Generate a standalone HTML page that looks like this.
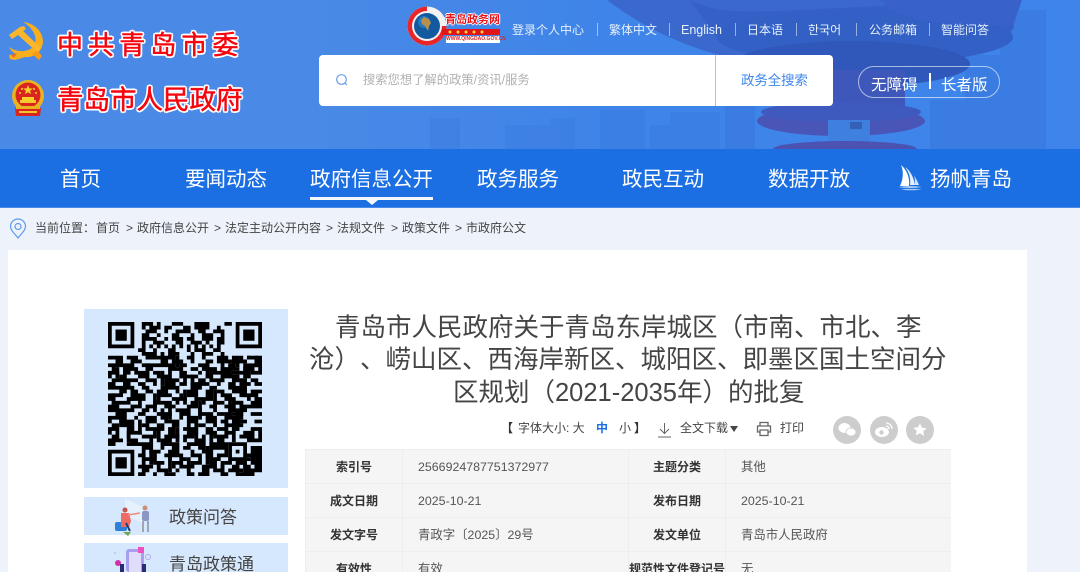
<!DOCTYPE html>
<html lang="zh-CN">
<head>
<meta charset="utf-8">
<title>青岛市人民政府</title>
<style>
*{margin:0;padding:0;box-sizing:border-box}
html,body{width:1080px;height:572px;overflow:hidden;background:#eef3fb}
body{position:relative;font-family:"Liberation Sans","Noto Sans CJK SC",sans-serif;color:#444;text-spacing-trim:space-all;font-feature-settings:"palt" 0}
.a{position:absolute;white-space:nowrap}
#hd{position:absolute;left:0;top:0;width:1080px;height:149px;background:linear-gradient(90deg,#4a8ae6 0,#4a8ae6 300px,#3f84e8 600px,#3e84ea 1080px);overflow:hidden}
.red{color:#f5060f;font-weight:400;-webkit-text-stroke:.5px #f5060f;text-shadow:2px 0 0 #fff,-2px 0 0 #fff,0 2px 0 #fff,0 -2px 0 #fff,1.500px 1.500px 0 #fff,-1.500px -1.500px 0 #fff,1.500px -1.500px 0 #fff,-1.500px 1.500px 0 #fff}
.tl{font-size:12px;color:#e6f0fd;top:22px;line-height:16px}
.sp{width:1px;height:13px;top:23px;background:rgba(255,255,255,.5)}
.nav{font-size:20.500px;color:#fff;top:166px;line-height:27px}
.bc{font-size:12px;color:#444;top:220px;line-height:16px}
.tb{font-size:12px;color:#444;top:420px;line-height:16px}
.cell{position:absolute;background:#f5f5f5;font-size:12px;line-height:35px;color:#555;overflow:hidden;white-space:nowrap}
.lb{font-weight:700;color:#333;text-align:center}
.vl{padding-left:15px;font-size:12.400px}
</style>
</head>
<body>
<div id="hd">
<svg width="1080" height="149" style="position:absolute;left:0;top:0">
<g fill="#3a7adf" opacity=".4">
<rect x="430" y="118" width="30" height="31"/><rect x="505" y="125" width="50" height="24"/><rect x="550" y="118" width="25" height="31"/><rect x="600" y="110" width="45" height="39"/><rect x="650" y="125" width="40" height="24"/><rect x="670" y="112" width="50" height="37"/>
</g>
<g fill="#3a7ce2">
<rect x="725" y="106" width="30" height="43"/>
<rect x="930" y="100" width="70" height="49"/>
<rect x="1000" y="10" width="46" height="139"/>
<rect x="965" y="55" width="40" height="94"/>
</g>
<path d="M607 0C640 25 680 45 720 55L860 72 1010 36 1022 0Z" fill="#3a68cc"/>
<path d="M690 0C730 20 760 10 1005 0L1014 28C990 50 900 60 860 62 780 60 735 45 720 42Z" fill="#3560c6"/>
<ellipse cx="865" cy="37" rx="148" ry="27" fill="#3360c4"/>
<path d="M880 0C900 20 930 25 1000 25L1012 25 1022 0Z" fill="#3862c9"/>
<ellipse cx="852" cy="64" rx="118" ry="23" fill="#2f58ba"/>
<rect x="785" y="70" width="120" height="45" fill="#3e57ba"/>
<ellipse cx="841" cy="121" rx="84" ry="15" fill="#4a55b8"/>
<ellipse cx="841" cy="112" rx="80" ry="10" fill="#3f5abf"/>
<rect x="828" y="120" width="42" height="22" fill="#3f80de"/>
<rect x="850" y="122" width="12" height="7" fill="#3560b8"/>
<ellipse cx="845" cy="149" rx="72" ry="8" fill="#4c52b2"/>
</svg>

<!-- party emblem -->
<svg class="a" style="left:8px;top:21px" width="36" height="40" viewBox="0 0 36 40">
<path d="M15 1C26 2 35 10 35 21 34 31 26 37 17 36L7 39 2 38 1 34 8 33C4 31 2 28 1 26 8 31 18 32 25 26 31 19 26 7 15 1Z" fill="#f9ae1c"/>
<path d="M34 35 29 29 24 33 31 39Z" fill="#f79a18"/>
<path d="M12 6 1 14 4 18 10 14 29 31 33 27 15 10 18 8 16 5Z" fill="#fbb62c"/>
<path d="M3 34 9 32 6 37Z" fill="#ef6b1e"/>
</svg>

<!-- national emblem -->
<svg class="a" style="left:10px;top:80px" width="36" height="38" viewBox="0 0 36 38">
<circle cx="18" cy="16" r="16" fill="#e9b321"/>
<circle cx="18" cy="15" r="12.500" fill="#d9251d"/>
<path d="M18 5l1.300 3.400 3.600.1-2.800 2.200 1 3.400L18 12.200l-3.100 1.900 1-3.400-2.800-2.200 3.600-.1Z" fill="#f7d02a"/>
<g fill="#f7d02a"><circle cx="10" cy="13" r="1"/><circle cx="26" cy="13" r="1"/><circle cx="12" cy="9" r="1"/><circle cx="24" cy="9" r="1"/></g>
<path d="M10 20H26V23H10Z" fill="#f3c62d"/>
<path d="M12 17H24V21H12Z" fill="#f7d02a"/>
<path d="M5 28H31L30 36H6Z" fill="#d9251d"/>
<path d="M6 26H30V29H6Z" fill="#e9b321"/>
<path d="M9 31H27V33H9Z" fill="#f3c62d"/>
</svg>

<div class="a red" style="left:57px;top:27px;font-size:26px;line-height:36px;letter-spacing:5.100px">中共青岛市委</div>
<div class="a red" style="left:57px;top:82px;font-size:26.500px;line-height:36px">青岛市人民政府</div>

<!-- portal logo -->
<svg class="a" style="left:406px;top:5px" width="96" height="42" viewBox="0 0 96 42">
<circle cx="21" cy="21" r="19.500" fill="#f2f2f2"/>
<path d="M21 1.500A19.500 19.500 0 1 0 40.500 21L36 21A15 15 0 1 1 21 6Z" fill="#e8262a"/>
<circle cx="21" cy="21" r="13" fill="#13599f"/>
<circle cx="18" cy="17" r="6" fill="#2f86c9" opacity=".7"/>
<path d="M18 12l5 2 2 4-2 3-1 5-3-5-3-2-1-4Z" fill="#b98f4c"/>
<path d="M36 24H94V30H36Z" fill="#e11419"/>
<path d="M40 31H94V38H40Z" fill="#fff"/>
<g fill="#ffd92b"><circle cx="44" cy="27" r="1.500"/><circle cx="52" cy="27" r="1.500"/><circle cx="60" cy="27" r="1.500"/><circle cx="68" cy="27" r="1.500"/><circle cx="76" cy="27" r="1.500"/></g>
</svg>
<div class="a" style="left:445px;top:13px;font-size:11px;line-height:15px;font-weight:700;color:#e8141a;text-shadow:1px 0 0 #fff,-1px 0 0 #fff,0 1px 0 #fff,0 -1px 0 #fff">青岛政务网</div>
<div class="a" style="left:446px;top:36px;font-size:5px;line-height:6px;color:#d8262a;font-weight:700">WWW.QINGDAO.GOV.CN</div>

<div class="a tl" style="left:512px">登录个人中心</div>
<div class="a sp" style="left:597px"></div>
<div class="a tl" style="left:609px">繁体中文</div>
<div class="a sp" style="left:669px"></div>
<div class="a tl" style="left:681px;font-size:12.500px">English</div>
<div class="a sp" style="left:735px"></div>
<div class="a tl" style="left:747px">日本语</div>
<div class="a sp" style="left:796px"></div>
<div class="a tl" style="left:808px;font-family:'Liberation Sans','Noto Sans CJK KR',sans-serif">한국어</div>
<div class="a sp" style="left:856px"></div>
<div class="a tl" style="left:869px">公务邮箱</div>
<div class="a sp" style="left:929px"></div>
<div class="a tl" style="left:941px">智能问答</div>

<div class="a" style="left:319px;top:55px;width:514px;height:51px;background:#fff;border-radius:4px"></div>
<div class="a" style="left:715px;top:55px;width:1px;height:51px;background:#a9c6f2"></div>
<svg class="a" style="left:335px;top:73px" width="14" height="14" viewBox="0 0 14 14" fill="none" stroke="#6f9ee6" stroke-width="1.200"><circle cx="6.500" cy="6.500" r="4.800"/><path d="M10 10l2 2"/></svg>
<div class="a" style="left:363px;top:72px;font-size:12.300px;line-height:17px;color:#b0b0b0">搜索您想了解的政策/资讯/服务</div>
<div class="a" style="left:741px;top:71px;font-size:13.400px;line-height:19px;color:#3f86e8">政务全搜索</div>

<div class="a" style="left:858px;top:66px;width:142px;height:32px;border:1px solid rgba(255,255,255,.6);border-radius:16px"></div>
<div class="a" style="left:871px;top:75px;font-size:15.500px;line-height:22px;color:#fff">无障碍</div>
<div class="a" style="left:929px;top:73px;width:1.500px;height:16px;background:#fff"></div>
<div class="a" style="left:941px;top:75px;font-size:15.500px;line-height:22px;color:#fff">长者版</div>
</div>

<!-- nav -->
<div class="a" style="left:0;top:149px;width:1080px;height:58px;background:#1b6fe3"></div>
<div class="a" style="left:0;top:207px;width:1080px;height:1px;background:#4a8ae8"></div>
<div class="a nav" style="left:60px">首页</div>
<div class="a nav" style="left:185px">要闻动态</div>
<div class="a nav" style="left:310px">政府信息公开</div>
<div class="a nav" style="left:477px">政务服务</div>
<div class="a nav" style="left:622px">政民互动</div>
<div class="a nav" style="left:768px">数据开放</div>
<div class="a nav" style="left:930px">扬帆青岛</div>
<div class="a" style="left:310px;top:197px;width:123px;height:3px;background:#f4f8fe"></div>
<div class="a" style="left:366px;top:200px;width:0;height:0;border-left:6px solid transparent;border-right:6px solid transparent;border-top:5px solid #f4f8fe"></div>
<svg class="a" style="left:898px;top:165px" width="25" height="26" viewBox="0 0 25 26">
<path d="M3 0C9 5 12 13 11 21H2C5 15 6 7 3 0Z" fill="#fff"/>
<path d="M7 2C13 6 16 14 17 20H12C13 13 11 7 7 2Z" fill="#e6f0fd"/>
<path d="M16 10C18 14 20 17 21 20H17C17 16 17 13 16 10Z" fill="#cfe2fb"/>
<path d="M0 22C8 21 16 21 24 22 16 23 8 23 0 22Z" fill="#dbe9fc"/>
<path d="M3 24.500C10 23.500 17 24 24 24.500 16 25.500 9 25.500 3 24.500Z" fill="#a9cbf7"/>
</svg>

<!-- breadcrumb -->
<svg class="a" style="left:9px;top:218px" width="18" height="21" viewBox="0 0 18 21" fill="none" stroke="#5b9aee" stroke-width="1.200"><path d="M9 20C5 15 1.500 12 1.500 8.500A7.500 7.500 0 0 1 16.500 8.500C16.500 12 13 15 9 20Z"/><circle cx="9" cy="8.500" r="3"/></svg>
<div class="a bc" style="left:35px">当前位置：</div>
<div class="a bc" style="left:96px">首页</div>
<div class="a bc" style="left:126px">&gt;</div><div class="a bc" style="left:137px">政府信息公开</div>
<div class="a bc" style="left:214px">&gt;</div><div class="a bc" style="left:225px">法定主动公开内容</div>
<div class="a bc" style="left:326px">&gt;</div><div class="a bc" style="left:337px">法规文件</div>
<div class="a bc" style="left:391px">&gt;</div><div class="a bc" style="left:402px">政策文件</div>
<div class="a bc" style="left:455px">&gt;</div><div class="a bc" style="left:466px">市政府公文</div>

<!-- card -->
<div class="a" style="left:8px;top:250px;width:1019px;height:322px;background:#fff"></div>

<div class="a" style="left:84px;top:309px;width:204px;height:179px;background:#d6e8fd"></div>
<svg class="a" style="left:108px;top:322px" width="154" height="154" viewBox="0 0 41 41">
<path stroke="#000" stroke-width="1" fill="none" d="
M9 .5h3m1 0h1m3 0h3m3 0h4m4 0h2
M9 1.500h1m1 0h3m1 0h2m3 0h2m1 0h4m2 0h1
M10 2.500h3m2 0h1m2 0h4m2 0h2m2 0h3
M9 3.500h2m2 0h1m3 0h2m3 0h1m2 0h3m2 0h1
M9 4.500h4m2 0h1m1 0h3m1 0h2m2 0h3m1 0h2
M9 5.500h1m2 0h3m3 0h2m2 0h3m1 0h1m2 0h2
M9 6.500h1m1 0h1m1 0h1m1 0h1m1 0h1m1 0h1m1 0h1m1 0h1m1 0h1m1 0h1m1 0h1
M8 7.500h2m2 0h1m3 0h2m3 0h1m1 0h3m2 0h2
M9 8.500h4m1 0h1m1 0h3m3 0h1m2 0h3m2 0h1
M0 9.500h4m1 0h3m2 0h8m3 0h2m2 0h1m3 0h3m3 0h1m1 0h3
M2 10.500h2m2 0h3m5 0h2m1 0h3m2 0h1m3 0h2m1 0h2m2 0h2
M0 11.500h7m2 0h9m1 0h2m3 0h3m3 0h1m1 0h2m2 0h1m2 0h2
M1 12.500h1m2 0h4m2 0h2m4 0h4m2 0h2m1 0h4m1 0h5m1 0h2
M0 13.500h3m1 0h2m1 0h4m1 0h2m2 0h1m2 0h2m3 0h1m2 0h6m2 0h3
M0 14.500h1m2 0h2m3 0h3m2 0h4m2 0h5m2 0h2m2 0h5m1 0h2
M1 15.500h7m2 0h3m2 0h4m1 0h1m3 0h2m1 0h4m2 0h3
M0 16.500h2m2 0h2m2 0h2m2 0h1m2 0h3m1 0h2m1 0h5m2 0h1m2 0h2m1 0h2
M0 17.500h6m3 0h2m3 0h5m3 0h3m2 0h2m3 0h5
M3 18.500h2m1 0h2m2 0h2m1 0h3m2 0h1m2 0h3m2 0h2m1 0h2m2 0h4
M0 19.500h4m2 0h4m3 0h4m2 0h1m1 0h3m2 0h2m2 0h3m2 0h2
M0 20.500h2m3 0h5m3 0h1m3 0h4m2 0h5m3 0h3
M1 21.500h5m2 0h1m3 0h5m1 0h1m3 0h2m1 0h1m2 0h3m2 0h3
M0 22.500h3m3 0h3m1 0h3m2 0h3m3 0h3m3 0h2m2 0h3m1 0h2
M0 23.500h7m2 0h2m3 0h1m3 0h4m2 0h1m3 0h1m3 0h5
M2 24.500h3m3 0h2m3 0h4m2 0h3m2 0h4m3 0h2m1 0h2
M0 25.500h5m2 0h1m2 0h3m1 0h2m3 0h1m1 0h3m2 0h3m2 0h5
M0 26.500h1m2 0h4m3 0h3m2 0h4m2 0h3m2 0h3m1 0h2m1 0h2
M1 27.500h2m1 0h3m2 0h2m3 0h1m2 0h2m2 0h1m2 0h2m2 0h1m2 0h5
M0 28.500h3m2 0h2m3 0h5m1 0h2m2 0h4m2 0h2m1 0h3m1 0h2
M0 29.500h1m1 0h1m2 0h4m3 0h1m3 0h2m3 0h3m2 0h3m2 0h3
M1 30.500h2m2 0h1m3 0h4m2 0h4m1 0h3m2 0h1m2 0h4m1 0h1
M0 31.500h4m2 0h2m3 0h1m2 0h3m3 0h1m2 0h3m3 0h2m2 0h1
M0 32.500h2m3 0h7m2 0h5m2 0h5m1 0h7
M9 33.500h3m2 0h1m2 0h2m1 0h2m2 0h2m1 0h9
M9 34.500h1m1 0h3m2 0h3m3 0h1m2 0h3m3 0h2m1 0h3
M8 35.500h2m2 0h1m2 0h5m2 0h3m1 0h2m1 0h5m1 0h1
M9 36.500h4m3 0h1m2 0h2m3 0h1m2 0h3m2 0h4m1 0h1
M9 37.500h1m2 0h3m2 0h3m2 0h3m2 0h2m2 0h2m1 0h3
M8 38.500h4m1 0h1m3 0h1m1 0h4m2 0h4m1 0h1m2 0h2m1 0h1
M9 39.500h2m2 0h3m2 0h1m2 0h1m3 0h2m1 0h3m1 0h4
M8 40.500h2m2 0h1m2 0h3m3 0h2m1 0h3m3 0h2m2 0h1m1 0h1"/>
<path stroke="#000" stroke-width="1" fill="none" d="
M33 9.500h2m2 0h1m1 0h2
M31 10.500h2m1 0h3m2 0h2
M34 11.500h1m2 0h4
M36 12.500h3m1 0h1
M33 13.500h2m3 0h3
M34 15.500h3m1 0h2
M36 16.500h2m1 0h2
M35 18.500h2m1 0h3
M36 19.500h4
M37 20.500h1m1 0h2
M34 21.500h2m2 0h3
M37 22.500h4
M29 24.500h2m2 0h3m2 0h3
M34 26.500h3m2 0h2
M33 28.500h2m3 0h3
M36 29.500h3m1 0h1
M35 30.500h4m1 0h1
M37 31.500h4
M38 33.500h3
M38 34.500h3
M37 35.500h4
M38 36.500h3
M35 37.500h1m2 0h3
M36 38.500h2m1 0h2
M36 39.500h5
M35 40.500h4"/>
<path stroke="#000" stroke-width="1" fill="none" d="
M10.500 11v5M14.500 13v4M18.500 9v3M22.500 14v4M26.500 10v5M30.500 12v4M6.500 17v4M12.500 19v5M16.500 22v4M20.500 18v4M24.500 21v5M28.500 18v5M32.500 20v4M3.500 24v4M8.500 26v4M13.500 27v5M18.500 28v4M23.500 26v5M27.500 29v4M31.500 26v5M11.500 34v4M16.500 35v5M21.500 36v4M26.500 33v5M30.500 37v4M2.500 12v3M1.500 19v4M5.500 29v3"/>
<g fill="#d6e8fd"><rect width="8" height="8"/><rect x="33" width="8" height="8"/><rect y="33" width="8" height="8"/><rect x="32" y="32" width="5" height="5"/></g>
<g fill="#000">
<path fill-rule="evenodd" d="M0 0H7V7H0ZM1 1V6H6V1Z"/><rect x="2" y="2" width="3" height="3"/>
<path fill-rule="evenodd" d="M34 0H41V7H34ZM35 1V6H40V1Z"/><rect x="36" y="2" width="3" height="3"/>
<path fill-rule="evenodd" d="M0 34H7V41H0ZM1 35V40H6V35Z"/><rect x="2" y="36" width="3" height="3"/>
<path fill-rule="evenodd" d="M32 32H37V37H32ZM33 33V36H36V33Z"/><rect x="34" y="34" width="1" height="1"/>
</g>
</svg>

<div class="a" style="left:84px;top:497px;width:204px;height:38px;background:#d6e8fd"></div>
<svg class="a" style="left:112px;top:497px" width="44" height="40" viewBox="0 0 44 40">
<path d="M13 2 31 10V26L13 18Z" fill="#e6f1fe"/>
<rect x="3" y="25" width="12" height="9" rx="2" fill="#2f7fd6"/>
<path d="M9 16h8l2 8-2 6H9Z" fill="#ee6a62"/>
<circle cx="13" cy="13" r="2.500" fill="#c9534e"/>
<path d="M16 18l12-2" stroke="#ee8a7e" stroke-width="1.500"/>
<path d="M14 26l4 8" stroke="#24406e" stroke-width="2"/>
<path d="M11 35h8l-3 4Z" fill="#6aa84f"/>
<rect x="30" y="14" width="7" height="10" rx="2" fill="#8a97c4"/>
<circle cx="33" cy="11" r="2.500" fill="#c98f7c"/>
<path d="M31 24v11M36 24v11" stroke="#8a8f9c" stroke-width="1.500"/>
</svg>
<div class="a" style="left:169px;top:506px;font-size:17px;line-height:24px;color:#444">政策问答</div>

<div class="a" style="left:84px;top:543px;width:204px;height:29px;background:#d6e8fd"></div>
<svg class="a" style="left:112px;top:545px" width="46" height="27" viewBox="0 0 46 27">
<rect x="14" y="4" width="18" height="23" rx="3" fill="#a99ff0"/>
<rect x="17" y="7" width="12" height="20" fill="#e0ddfa"/>
<rect x="26" y="2" width="6" height="6" fill="#f04fc0"/>
<circle cx="36" cy="12" r="2.500" fill="none" stroke="#b7a8ee"/>
<circle cx="6" cy="18" r="3" fill="#d42fa8"/>
<rect x="8" y="19" width="4" height="8" fill="#2b2a78"/>
<rect x="30" y="19" width="4" height="8" fill="#2b2a78"/>
<circle cx="3" cy="8" r="1" fill="#c6b8f0"/>
</svg>
<div class="a" style="left:169px;top:553px;font-size:17px;line-height:24px;color:#444">青岛政策通</div>

<!-- title -->
<div class="a" style="left:335px;top:312px;font-size:25.500px;line-height:32px;color:#444">青岛市人民政府关于青岛东岸城区（市南、市北、李</div>
<div class="a" style="left:309px;top:344px;font-size:25.500px;line-height:32px;color:#444">沧）、崂山区、西海岸新区、城阳区、即墨区国土空间分</div>
<div class="a" style="left:453px;top:377px;font-size:25.500px;line-height:32px;color:#444">区规划（2021-2035年）的批复</div>

<!-- toolbar -->
<div class="a tb" style="left:501px;font-weight:700;color:#333">【</div>
<div class="a tb" style="left:518px">字体大小: 大</div>
<div class="a tb" style="left:596px;color:#1b6fe3;font-weight:700">中</div>
<div class="a tb" style="left:619px">小</div>
<div class="a tb" style="left:634px;font-weight:700;color:#333">】</div>
<svg class="a" style="left:657px;top:422px" width="15" height="16" viewBox="0 0 15 16" fill="none" stroke="#666" stroke-width="1"><path d="M7.500 1V11M3 7l4.500 4.500L12 7M1 15H14"/></svg>
<div class="a tb" style="left:680px">全文下载</div>
<div class="a" style="left:730px;top:426px;width:0;height:0;border-left:4px solid transparent;border-right:4px solid transparent;border-top:6px solid #444"></div>
<svg class="a" style="left:756px;top:421px" width="16" height="16" viewBox="0 0 16 16" fill="none" stroke="#666" stroke-width="1.300"><path d="M4 5V1.500H12V5M4 11H1.500V5H14.500V11H12M4 9H12V14.500H4Z"/></svg>
<div class="a tb" style="left:780px">打印</div>
<svg class="a" style="left:832px;top:415px" width="104" height="30" viewBox="0 0 104 30">
<circle cx="15" cy="15" r="14" fill="#cdcdcd"/><circle cx="52" cy="15" r="14" fill="#cdcdcd"/><circle cx="88" cy="15" r="14" fill="#cdcdcd"/>
<ellipse cx="12.500" cy="13" rx="6" ry="5" fill="#fff"/><ellipse cx="19" cy="17" rx="5" ry="4" fill="#fff" stroke="#cdcdcd" stroke-width=".8"/>
<ellipse cx="50" cy="17" rx="7" ry="5" fill="#fff"/><circle cx="49.500" cy="17.500" r="2.200" fill="#cdcdcd"/>
<path d="M54 8a6 6 0 0 1 6 6M54 11a3 3 0 0 1 3 3" fill="none" stroke="#fff" stroke-width="1.300"/>
<path d="M88 8.500l2 4.300 4.700.5-3.500 3.100 1 4.600L88 18.200l-4.200 2.300 1-4.600-3.500-3.100 4.700-.5Z" fill="#fff"/>
</svg>

<!-- table -->
<div class="a" style="left:305px;top:449px;width:646px;height:123px;background:#eeeeee"></div>
<div class="cell lb" style="left:306px;top:450px;width:96px;height:33px">索引号</div>
<div class="cell vl" style="left:403px;top:450px;width:225px;height:33px">2566924787751372977</div>
<div class="cell lb" style="left:629px;top:450px;width:96px;height:33px">主题分类</div>
<div class="cell vl" style="left:726px;top:450px;width:225px;height:33px">其他</div>
<div class="cell lb" style="left:306px;top:484px;width:96px;height:33px">成文日期</div>
<div class="cell vl" style="left:403px;top:484px;width:225px;height:33px">2025-10-21</div>
<div class="cell lb" style="left:629px;top:484px;width:96px;height:33px">发布日期</div>
<div class="cell vl" style="left:726px;top:484px;width:225px;height:33px">2025-10-21</div>
<div class="cell lb" style="left:306px;top:518px;width:96px;height:33px">发文字号</div>
<div class="cell vl" style="left:403px;top:518px;width:225px;height:33px">青政字〔2025〕29号</div>
<div class="cell lb" style="left:629px;top:518px;width:96px;height:33px">发文单位</div>
<div class="cell vl" style="left:726px;top:518px;width:225px;height:33px">青岛市人民政府</div>
<div class="cell lb" style="left:306px;top:552px;width:96px;height:20px">有效性</div>
<div class="cell vl" style="left:403px;top:552px;width:225px;height:20px">有效</div>
<div class="cell lb" style="left:629px;top:552px;width:96px;height:20px">规范性文件登记号</div>
<div class="cell vl" style="left:726px;top:552px;width:225px;height:20px">无</div>
</body>
</html>
